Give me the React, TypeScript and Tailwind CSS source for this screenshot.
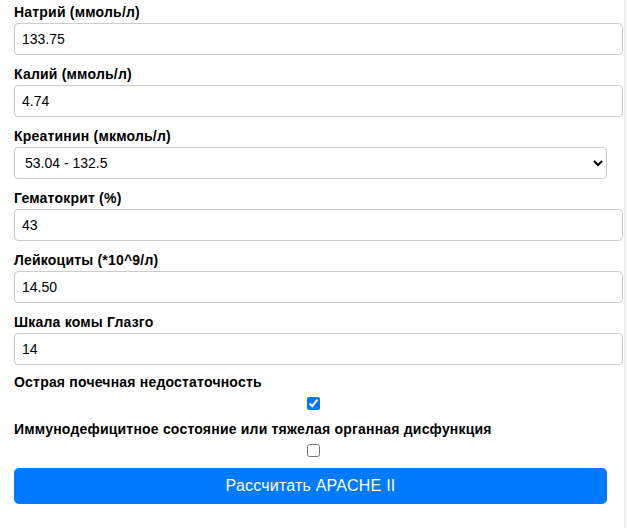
import React from "react";

const fields: { label: string; value: string; select?: boolean }[] = [
  { label: "Натрий (ммоль/л)", value: "133.75" },
  { label: "Калий (ммоль/л)", value: "4.74" },
  { label: "Креатинин (мкмоль/л)", value: "53.04 - 132.5", select: true },
  { label: "Гематокрит (%)", value: "43" },
  { label: "Лейкоциты (*10^9/л)", value: "14.50" },
  { label: "Шкала комы Глазго", value: "14" },
];

export default function App() {
  return (
    <div className="w-[627px] h-[528px] bg-white overflow-hidden" style={{ fontFamily: '"Liberation Sans", Arial, sans-serif' }}>
      <div className="w-[626px] h-[528px] border-r-2 border-[#eeeeee] pl-[14px] pt-[3px] text-black">
        {fields.map((f) => (
          <div key={f.label} className="mb-[10px]">
            <label className="block text-[14px] leading-[18px] font-bold mb-[2px] tracking-[0.2px]">{f.label}</label>
            {f.select ? (
              <select
                defaultValue={f.value}
                className="block w-[593px] h-[32px] border border-[#cccccc] rounded-[4px] pl-[6px] text-[14px] text-black bg-white"
              >
                <option value="53.04 - 132.5">53.04 - 132.5</option>
              </select>
            ) : (
              <input
                type="text"
                defaultValue={f.value}
                className="block w-[609px] h-[32px] border border-[#cccccc] rounded-[4px] px-[7px] text-[14px] text-black bg-white outline-none"
              />
            )}
          </div>
        ))}
        <div className="-mt-[2px]">
          <label className="block text-[14px] leading-[18px] font-bold tracking-[0.2px]">Острая почечная недостаточность</label>
          <div className="w-[593px] flex justify-center pt-[6px] pl-[6px]">
            <input type="checkbox" defaultChecked className="block w-[13px] h-[13px] m-0" />
          </div>
        </div>
        <div className="mt-[10px]">
          <label className="block text-[14px] leading-[18px] font-bold tracking-[0.2px]">Иммунодефицитное состояние или тяжелая органная дисфункция</label>
          <div className="w-[593px] flex justify-center pt-[6px] pl-[6px]">
            <input type="checkbox" className="block w-[13px] h-[13px] m-0" />
          </div>
        </div>
        <button className="mt-[11px] w-[593px] h-[36px] rounded-[5px] bg-[#007bff] text-white text-[16px] tracking-[0.2px] flex items-center justify-center">
          Рассчитать APACHE II
        </button>
      </div>
    </div>
  );
}
